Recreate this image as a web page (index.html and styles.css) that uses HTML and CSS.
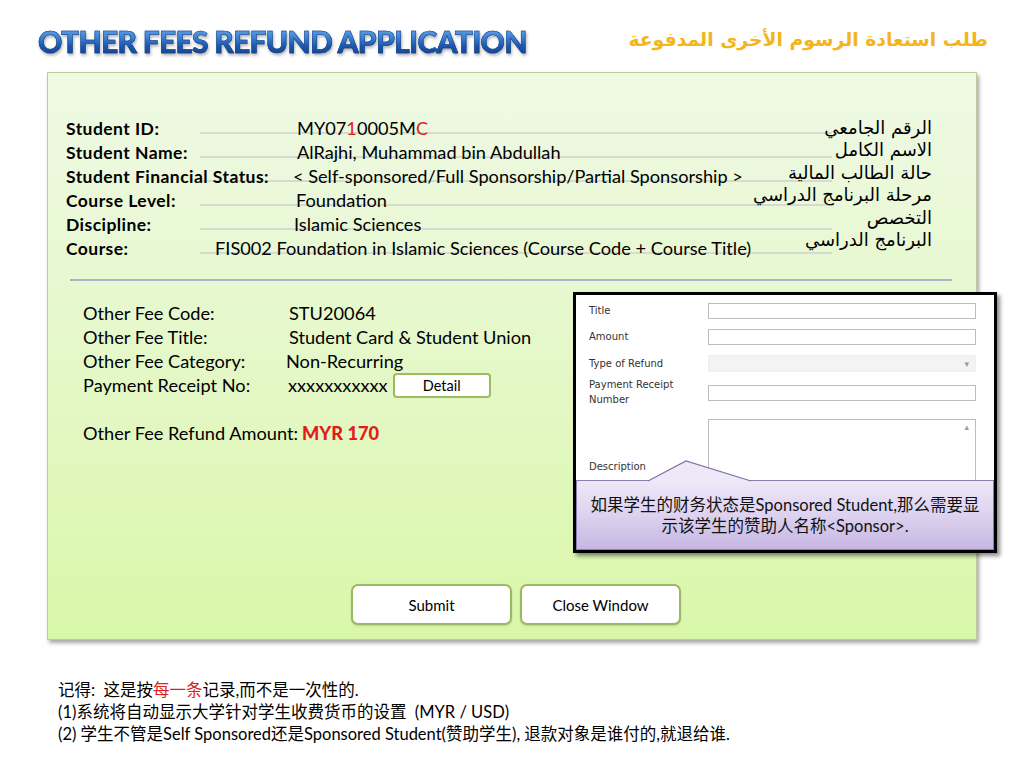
FILE: index.html
```html
<!DOCTYPE html>
<html lang="en">
<head>
<meta charset="utf-8">
<title>Other Fees Refund Application</title>
<link rel="stylesheet" href="styles.css">
</head>
<body>
<header class="head">
  <h1 class="title">OTHER FEES REFUND APPLICATION</h1>
  <div class="title-ar" dir="rtl" lang="ar">طلب استعادة الرسوم الأخرى المدفوعة</div>
</header>

<main class="panel">
  <section class="info">
    <div class="rows">
      <div class="row"><span class="lbl">Student ID:</span><span class="val">MY07<span class="red">1</span>0005M<span class="red">C</span></span></div>
      <div class="row"><span class="lbl">Student Name:</span><span class="val">AlRajhi, Muhammad bin Abdullah</span></div>
      <div class="row"><span class="lbl lbl-status">Student Financial Status:</span><span class="val">&lt; Self-sponsored/Full Sponsorship/Partial Sponsorship &gt;</span></div>
      <div class="row"><span class="lbl lbl-level">Course Level:</span><span class="val">Foundation</span></div>
      <div class="row"><span class="lbl lbl-disc">Discipline:</span><span class="val">Islamic Sciences</span></div>
      <div class="row"><span class="lbl lbl-course">Course:</span><span class="val">FIS002 Foundation in Islamic Sciences (Course Code + Course Title)</span></div>
    </div>
    <div class="ar" dir="rtl" lang="ar">
      <div>الرقم الجامعي</div>
      <div>الاسم الكامل</div>
      <div>حالة الطالب المالية</div>
      <div>مرحلة البرنامج الدراسي</div>
      <div>التخصص</div>
      <div>البرنامج الدراسي</div>
    </div>
  </section>

  <hr class="sep">

  <section class="fee">
    <div class="fee-text">
      <div class="frow"><span class="flbl">Other Fee Code:</span><span class="fval">STU20064</span></div>
      <div class="frow"><span class="flbl">Other Fee Title:</span><span class="fval">Student Card &amp; Student Union</span></div>
      <div class="frow"><span class="flbl flbl-cat">Other Fee Category:</span><span class="fval">Non-Recurring</span></div>
      <div class="frow"><span class="flbl flbl-rec">Payment Receipt No:</span><span class="fval">xxxxxxxxxxx</span><button class="detail">Detail</button></div>
      <div class="frow frow-amount">Other Fee Refund Amount: <strong class="red">MYR 170</strong></div>
    </div>

    <div class="form">
      <div class="frm-row r1"><span class="fl">Title</span><div class="inp"></div></div>
      <div class="frm-row r2"><span class="fl">Amount</span><div class="inp"></div></div>
      <div class="frm-row r3"><span class="fl">Type of Refund</span><div class="inp sel"><span class="arrow">▾</span></div></div>
      <div class="frm-row r4"><span class="fl fl-two">Payment Receipt<br>Number</span><div class="inp"></div></div>
      <div class="frm-row r5"><span class="fl fl-desc">Description</span><div class="inp area"><span class="up">▴</span></div></div>

      <div class="callout">
        <svg class="pointer" width="106" height="22" viewBox="0 0 106 22">
          <path d="M1 21 L39 1 L104 21 Z" fill="#efe9f7"/>
          <path d="M1 21 L39 1 L104 21" fill="none" stroke="#7e71a6" stroke-width="1.2"/>
        </svg>
        <p>如果学生的财务状态是Sponsored Student,那么需要显<br>示该学生的赞助人名称&lt;Sponsor&gt;.</p>
      </div>
    </div>
  </section>

  <div class="actions">
    <button class="btn">Submit</button>
    <button class="btn">Close Window</button>
  </div>
</main>

<footer class="notes">
  <p>记得:&nbsp; 这是按<span class="red-n">每一条</span>记录,而不是一次性的.</p>
  <p>(1)系统将自动显示大学针对学生收费货币的设置&nbsp; (MYR / USD)</p>
  <p>(2) 学生不管是Self Sponsored还是Sponsored Student(赞助学生), 退款对象是谁付的,就退给谁.</p>
</footer>
</body>
</html>
```

FILE: styles.css
```css
* { box-sizing: border-box; }

html, body {
  margin: 0;
  padding: 0;
}

body {
  width: 1024px;
  height: 768px;
  background: #ffffff;
  font-family: "Lato", "Noto Sans CJK SC", sans-serif;
  color: #000;
  overflow: hidden;
}

.red { color: #e31b1b; }

/* ---------- header ---------- */
.head {
  height: 72px;
  display: flex;
  justify-content: space-between;
  align-items: flex-start;
  padding: 0 36px 0 38px;
}

.title {
  margin: 23px 0 0 0;
  font-family: "Lato", sans-serif;
  font-weight: 900;
  font-size: 30px;
  line-height: 36px;
  letter-spacing: -0.7px;
  background: linear-gradient(180deg, #7db6ee 0%, #3b82d6 40%, #1a56ad 65%, #123f86 100%);
  -webkit-background-clip: text;
  background-clip: text;
  color: transparent;
  -webkit-text-stroke: 0.5px #123b7c;
  filter: drop-shadow(1px 2px 1.5px rgba(0, 0, 0, 0.3));
}

.title-ar {
  margin-top: 25px;
  font-family: "DejaVu Sans", sans-serif;
  font-weight: bold;
  font-size: 18.8px;
  line-height: 30px;
  color: #f4b51a;
}

/* ---------- main panel ---------- */
.panel {
  margin-left: 47px;
  width: 930px;
  height: 568px;
  border: 1px solid #bccba0;
  background: linear-gradient(180deg, #eff9e5 0%, #e6f8cc 45%, #d9f7a9 100%);
  box-shadow: 2px 3px 4px rgba(0, 0, 0, 0.35);
  padding-top: 43px;
}

.info {
  display: grid;
  grid-template-columns: 1fr;
  padding: 0 44px 0 18px;
}

.rows, .ar {
  grid-area: 1 / 1;
}

.row {
  height: 24px;
  line-height: 24px;
  white-space: nowrap;
  background: linear-gradient(#d5dbce, #d5dbce) no-repeat;
  background-size: 632px 2px;
  background-position: 134px 16px;
}

.lbl {
  display: inline-block;
  width: 231px;
  font-weight: bold;
  font-size: 17.5px;
  letter-spacing: 0.45px;
}
.lbl-status { width: 227px; }
.lbl-level { width: 230px; }
.lbl-disc { width: 228px; }
.lbl-course { width: 149px; }

.val {
  font-size: 18.2px;
}

.ar {
  justify-self: end;
  font-family: "DejaVu Sans", sans-serif;
  font-size: 18px;
  line-height: 22.4px;
  text-align: right;
  margin-top: 1px;
}

.sep {
  margin: 19px 24px 0 22px;
  border: 0;
  height: 2px;
  background: #a3b6c4;
}

/* ---------- fee section ---------- */
.fee {
  display: flex;
  margin-top: 11px;
}

.fee-text {
  padding: 9px 0 0 35px;
  font-size: 18.2px;
}

.frow {
  height: 24px;
  line-height: 24px;
  white-space: nowrap;
  display: flex;
  align-items: center;
}

.flbl {
  display: inline-block;
  width: 206px;
}
.flbl-cat { width: 203px; }
.flbl-rec { width: 205px; }

.detail {
  margin-left: 5px;
  width: 98px;
  height: 25px;
  border: 2px solid #9dbb60;
  border-radius: 4px;
  background: #fff;
  font-family: "Lato", sans-serif;
  font-size: 14.5px;
  padding: 0;
  color: #000;
}

.frow-amount {
  margin-top: 24px;
}
.frow-amount strong {
  margin-left: 4px;
  font-weight: 900;
}

/* ---------- form panel ---------- */
.form {
  position: relative;
  margin-left: auto;
  margin-right: -21px;
  width: 424px;
  height: 261px;
  border: 3px solid #000;
  background: #fff;
  box-shadow: 3px 3px 4px rgba(0, 0, 0, 0.45);
  padding: 8px 18px 0 13px;
  font-family: "DejaVu Sans", sans-serif;
  font-size: 10px;
  color: #333;
  overflow: hidden;
}

.frm-row {
  display: grid;
  grid-template-columns: 119px 1fr;
  align-items: start;
}
.r1, .r2 { height: 26px; }
.r3 { height: 30px; }
.r4 { height: 34px; }

.fl {
  line-height: 15px;
}
.r3 .fl { margin-top: 1px; }
.fl-two { margin-top: -8px; }
.fl-desc { margin-top: 40px; }

.inp {
  height: 16px;
  border: 1px solid #bdbdbd;
  background: #fff;
}
.sel {
  height: 17px;
  border-color: #efefef;
  background: #f3f3f3;
  display: flex;
  justify-content: flex-end;
  align-items: center;
  padding-right: 6px;
}
.arrow {
  font-size: 9px;
  color: #9a9a9a;
}
.area {
  height: 80px;
  display: flex;
  justify-content: flex-end;
  padding: 2px 6px 0 0;
}
.up {
  font-size: 9px;
  color: #a0a0a0;
}

.callout {
  position: absolute;
  left: 0;
  right: 0;
  bottom: 0;
  height: 70px;
  border: 1px solid #8a7db2;
  background: linear-gradient(180deg, #eee8f7 0%, #ddd2ef 50%, #c6b6e2 100%);
}
.pointer {
  position: absolute;
  left: 70px;
  top: -21px;
}
.callout p {
  margin: 14px 0 0 0;
  text-align: center;
  font-family: "Lato", "Noto Sans CJK SC", sans-serif;
  font-size: 16.5px;
  line-height: 21px;
  color: #111;
}

/* ---------- buttons ---------- */
.actions {
  display: flex;
  gap: 8px;
  margin-top: 31px;
  padding-left: 303px;
}

.btn {
  width: 161px;
  height: 41px;
  border: 2px solid #9cb864;
  border-radius: 7px;
  background: #fff;
  font-family: "Lato", sans-serif;
  font-size: 15px;
  color: #000;
  box-shadow: 0 1px 2px rgba(0, 0, 0, 0.15);
}

/* ---------- notes ---------- */
.notes {
  margin: 39px 0 0 58px;
  font-family: "Lato", "Noto Sans CJK SC", sans-serif;
  font-size: 16.5px;
  line-height: 22px;
}
.notes p {
  margin: 0;
  white-space: nowrap;
}
.red-n { color: #e02020; }
```
